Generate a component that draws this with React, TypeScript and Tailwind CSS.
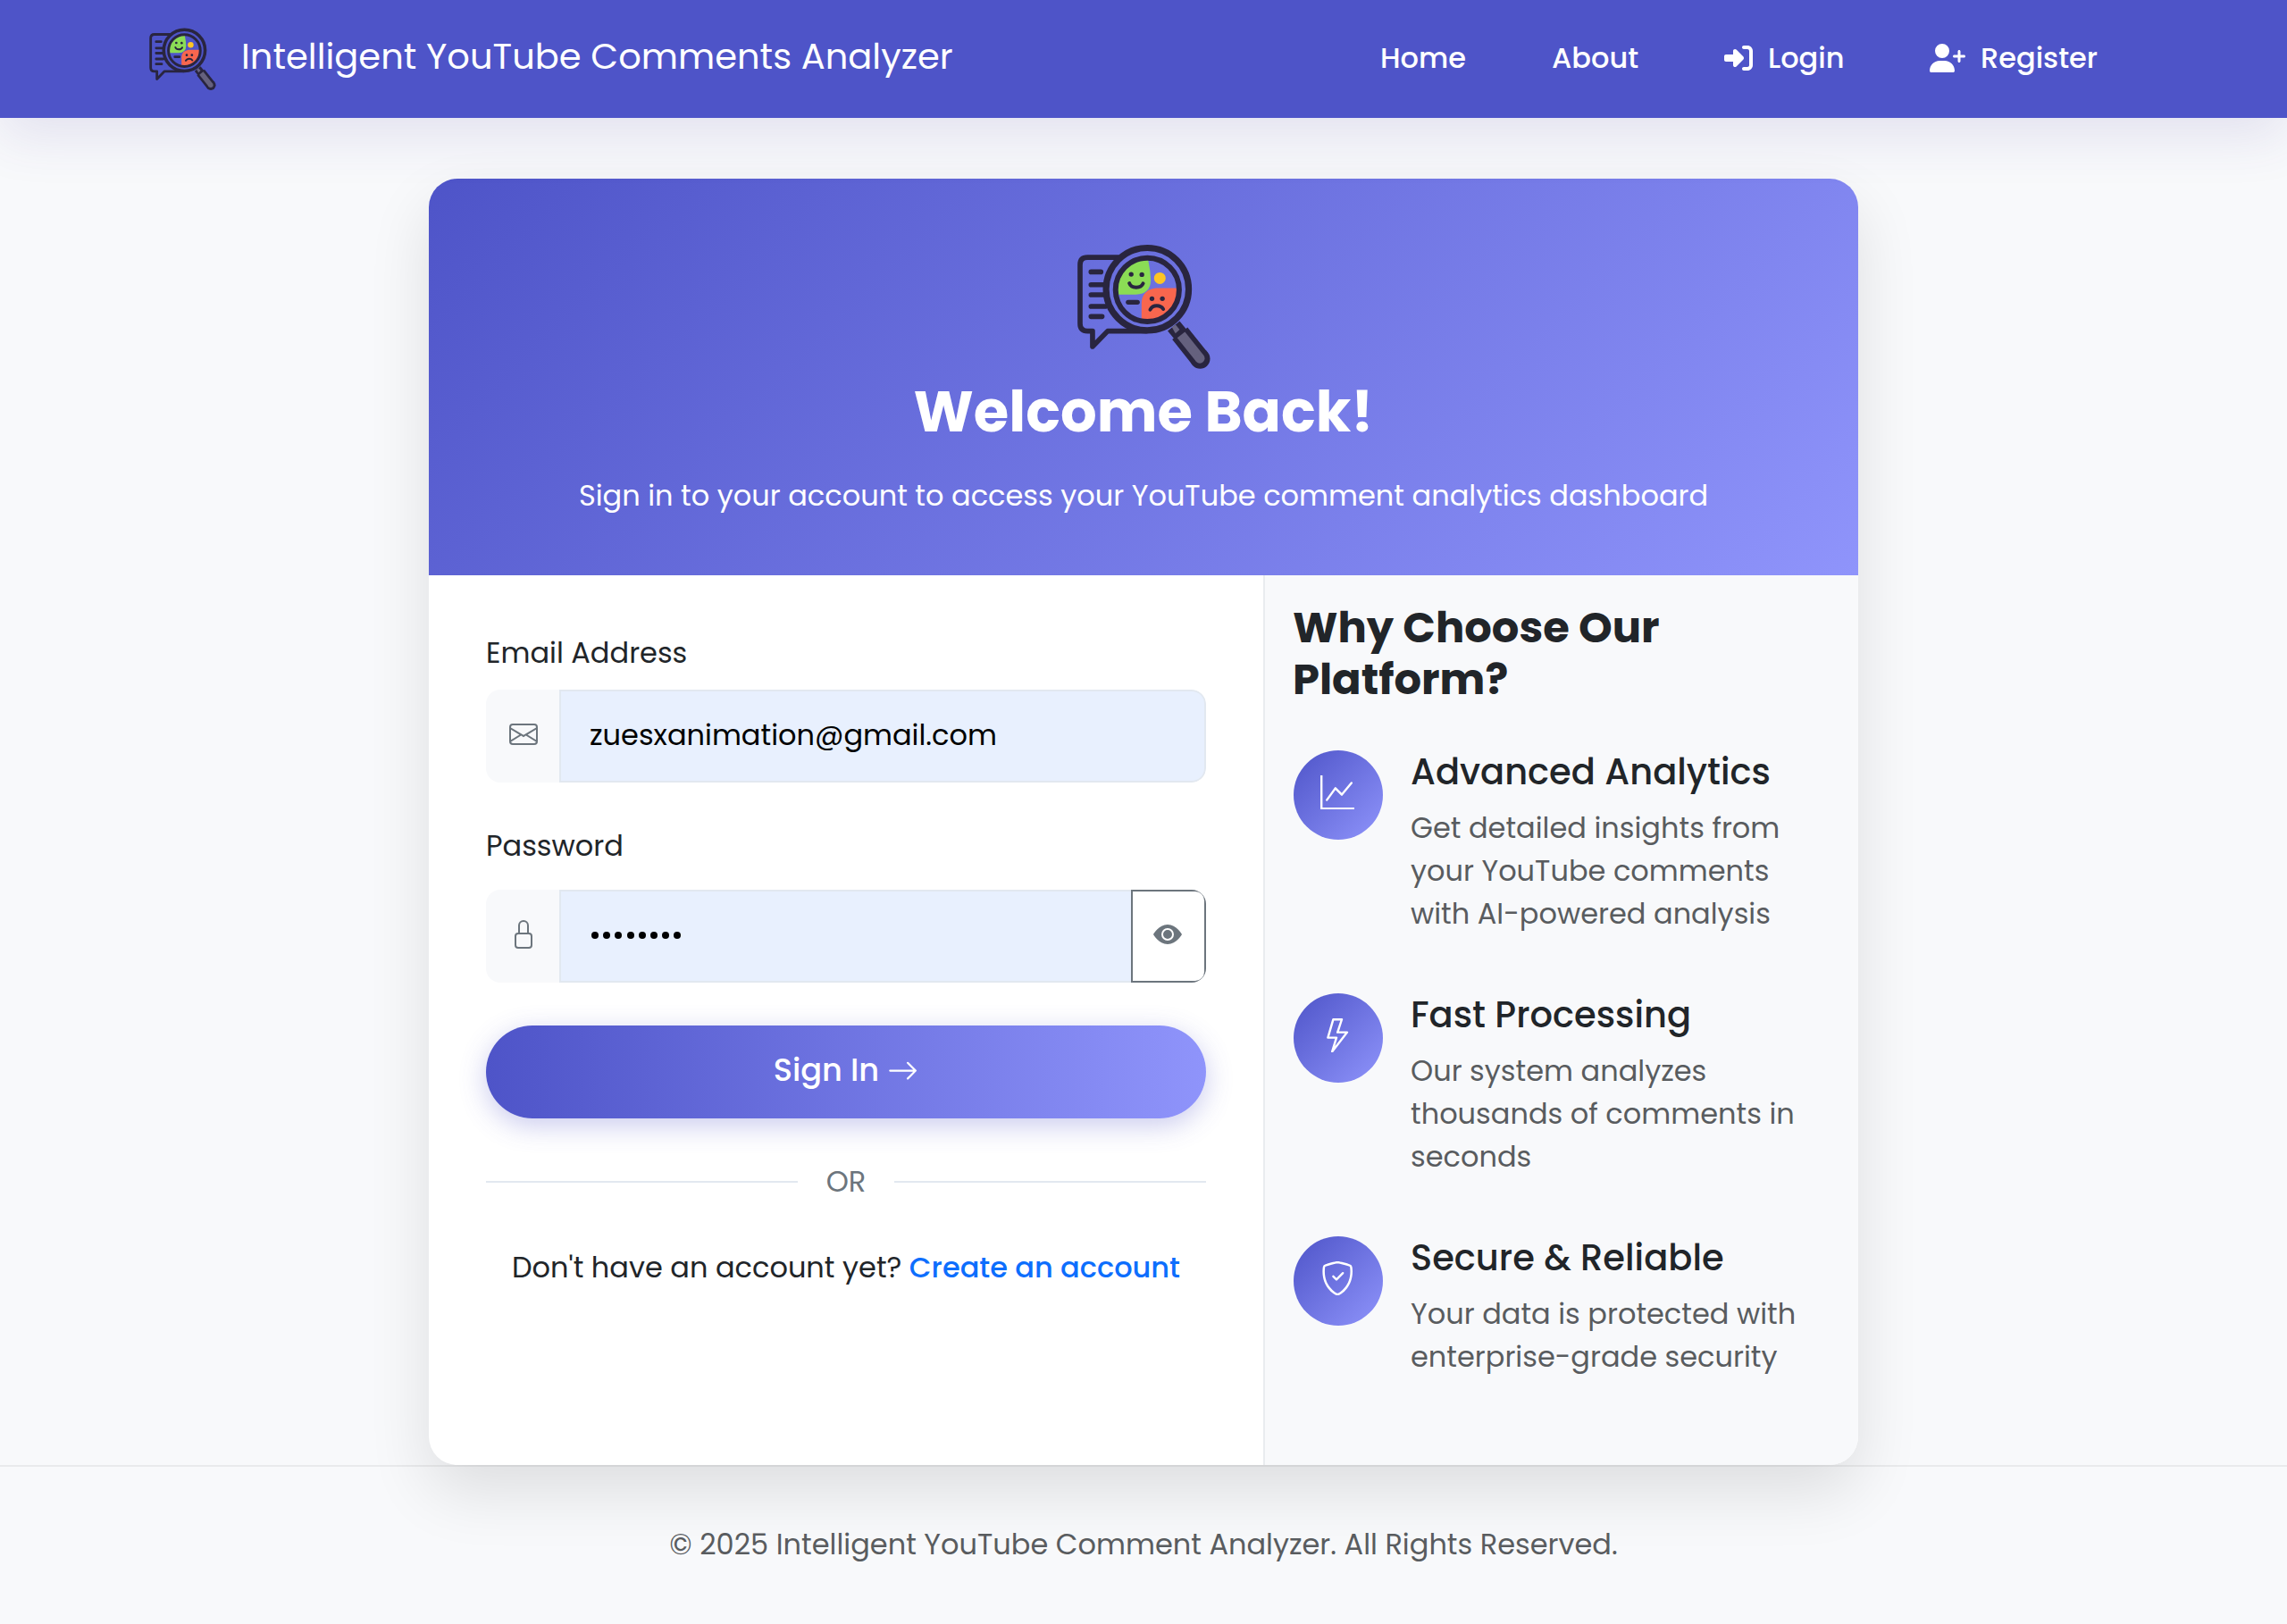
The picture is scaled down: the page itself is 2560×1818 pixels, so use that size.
import React from "react";
import { FaRightToBracket, FaUserPlus } from "react-icons/fa6";
import {
  BsArrowRight,
  BsEnvelope,
  BsEyeFill,
  BsGraphUp,
  BsLightning,
  BsLock,
  BsShieldCheck,
} from "react-icons/bs";

const INK = "#29253f";

function Logo({ className }: { className: string }) {
  return (
    <svg className={className} viewBox="138 100 448 420" fill="none" strokeLinecap="round" strokeLinejoin="round">
      <path
        d="M275 145H172Q147 145 147 170V368Q147 393 172 393H189V445L240 393H370"
        stroke={INK}
        strokeWidth="17"
      />
      <path d="M184 194H217M184 237H228M184 271H226M184 310H232M184 344H221" stroke={INK} strokeWidth="17" />
      <path d="M462 376L485 404" stroke={INK} strokeWidth="52" strokeLinecap="butt" />
      <path d="M483 401L551 486" stroke={INK} strokeWidth="66" strokeLinecap="butt" />
      <circle cx="551" cy="486" r="33.5" fill={INK} />
      <path d="M456 380L468 371L482 388L468 401Z" fill="#696583" />
      <path d="M487 406L550 485" stroke="#65617e" strokeWidth="33" strokeLinecap="butt" />
      <circle cx="550" cy="485" r="16.5" fill="#65617e" />
      <circle cx="373.5" cy="252" r="139" stroke={INK} strokeWidth="21.5" />
      <path d="M376 153Q384 190 385 222Q384 268 335 270H274A99 99 0 0 1 376 153Z" fill="#8bdc55" />
      <path d="M473 248H402Q356 254 354 298V354A100 100 0 0 0 473 248Z" fill="#f8664e" />
      <circle cx="373.5" cy="254" r="107" stroke={INK} strokeWidth="18" />
      <circle cx="415.5" cy="215" r="19.5" fill="#fec524" />
      <path d="M309 296H340" stroke={INK} strokeWidth="16" />
      <g fill={INK}>
        <circle cx="319" cy="202" r="8" />
        <circle cx="355" cy="203" r="8" />
        <circle cx="389" cy="284" r="8" />
        <circle cx="424" cy="284" r="8" />
      </g>
      <path d="M313 232Q318 246 336 246Q354 246 359 233" stroke={INK} strokeWidth="12" />
      <path d="M383 321Q390 308 405 308Q420 308 427 319" stroke={INK} strokeWidth="12" />
    </svg>
  );
}

function Navbar() {
  return (
    <nav className="relative z-10 flex h-[132px] items-center justify-between bg-[#4e54c8] pl-[167px] text-white shadow-[0_20px_60px_rgba(70,60,160,0.12)]">
      <a className="flex items-center gap-[28px]">
        <Logo className="h-[70px] w-[75px]" />
        <span className="mb-[6px] whitespace-nowrap text-[40px] leading-[48px]">
          Intelligent YouTube Comments Analyzer
        </span>
      </a>
      <div className="mb-[3px] flex w-[1015px] shrink-0 text-[32px] font-medium leading-[48px]">
        <a className="w-[192px]">Home</a>
        <a className="w-[193px]">About</a>
        <a className="flex w-[230px] items-center gap-[17px]">
          <FaRightToBracket className="size-8" />
          Login
        </a>
        <a className="flex items-center gap-[17px]">
          <FaUserPlus className="h-8 w-10" />
          Register
        </a>
      </div>
    </nav>
  );
}

function Field({
  icon,
  children,
  action,
}: {
  icon: React.ReactNode;
  children: React.ReactNode;
  action?: React.ReactNode;
}) {
  return (
    <div className="flex h-[104px] overflow-hidden rounded-[16px]">
      <div className="flex w-[82px] items-center bg-[#f8f9fb] pb-1 pl-[26px] text-[#6c757d]">{icon}</div>
      <div
        className={
          action
            ? "flex flex-1 items-center border-2 border-r-0 border-[#e2e8f0] bg-[#e8f0fe] pl-8 text-black"
            : "flex flex-1 items-center rounded-r-[16px] border-2 border-[#e2e8f0] bg-[#e8f0fe] pl-8 text-black"
        }
      >
        {children}
      </div>
      {action}
    </div>
  );
}

function LoginForm() {
  return (
    <div className="w-[934px] px-16 pt-[63px]">
      <label className="block leading-[48px]">Email Address</label>
      <div className="mt-[17px]">
        <Field icon={<BsEnvelope className="size-8" />}>
          <span className="mb-[2px]">zuesxanimation@gmail.com</span>
        </Field>
      </div>
      <label className="mt-[47px] block leading-[48px]">Password</label>
      <div className="mt-[25px]">
        <Field
          icon={<BsLock className="size-8" />}
          action={
            <button className="flex w-[84px] items-center justify-center rounded-r-[12px] border-2 border-[#6c757d] bg-white pb-1 pr-[2px] text-[#6c757d]">
              <BsEyeFill className="size-8" />
            </button>
          }
        >
          <div className="mb-0.5 ml-[2px] flex gap-[5.2px]">
            {[0, 1, 2, 3, 4, 5, 6, 7].map((i) => (
              <span key={i} className="size-2 rounded-full bg-black" />
            ))}
          </div>
        </Field>
      </div>
      <button className="mt-12 flex h-[104px] w-full items-center justify-center gap-[9px] rounded-full bg-[linear-gradient(90deg,#4e54c8,#8f94fb)] pb-[4px] text-[35.2px] font-medium text-white shadow-[0_8px_30px_rgba(78,84,200,0.3)]">
        <span>Sign In</span>
        <BsArrowRight className="mt-px size-[35.2px]" />
      </button>
      <div className="mt-[47px] flex h-12 items-center text-[#6c757d]">
        <span className="h-[2px] flex-1 bg-[#e2e8f0]" />
        <span className="w-[108px] text-center">OR</span>
        <span className="h-[2px] flex-1 bg-[#e2e8f0]" />
      </div>
      <p className="mt-[48px] whitespace-nowrap text-center leading-[48px]">
        Don't have an account yet? <a className="font-medium text-[#0d6efd]">Create an account</a>
      </p>
    </div>
  );
}

function Feature({ icon, title, children }: { icon: React.ReactNode; title: string; children: React.ReactNode }) {
  return (
    <div className="flex h-[272px] gap-[31px]">
      <div className="flex size-[100px] shrink-0 items-center justify-center rounded-full bg-[linear-gradient(135deg,#4e54c8,#8f94fb)] pb-[6px] pr-[2px] text-white">
        {icon}
      </div>
      <div className="w-[460px]">
        <h3 className="text-[40px] font-medium leading-[48px]">{title}</h3>
        <p className="mt-[15px] leading-[48px] text-[#595c5f]">{children}</p>
      </div>
    </div>
  );
}

function Features() {
  return (
    <div className="w-[666px] border-l-2 border-[#e9ecef] bg-[#f8f9fb] pl-8 pt-[30px]">
      <h2 className="-ml-px mb-[51px] w-[500px] text-[48px] font-bold leading-[57.6px]">Why Choose Our Platform?</h2>
      <Feature icon={<BsGraphUp className="size-[38.4px]" />} title="Advanced Analytics">
        Get detailed insights from your YouTube comments with AI-powered analysis
      </Feature>
      <Feature icon={<BsLightning className="size-[38.4px]" />} title="Fast Processing">
        Our system analyzes thousands of comments in seconds
      </Feature>
      <Feature icon={<BsShieldCheck className="size-[38.4px]" />} title="Secure & Reliable">
        Your data is protected with enterprise-grade security
      </Feature>
    </div>
  );
}

export default function App() {
  return (
    <div className="h-[1818px] overflow-hidden bg-[#f8f9fb] font-['Poppins','Inter',sans-serif] text-[32px] text-[#212529]">
      <Navbar />
      <main className="mx-auto mt-[68px] h-[1440px] w-[1600px] overflow-hidden rounded-[32px] bg-white shadow-[0_30px_70px_rgba(0,0,0,0.11)]">
        <header className="flex h-[444px] flex-col items-center bg-[linear-gradient(135deg,#4e54c8,#8f94fb)] pt-[73px] text-white">
          <Logo className="h-[140px] w-[149px]" />
          <h1 className="mt-[10px] text-[64px] font-bold leading-[76.8px]">Welcome Back!</h1>
          <p className="mt-[31px] whitespace-nowrap leading-[48px]">
            Sign in to your account to access your YouTube comment analytics dashboard
          </p>
        </header>
        <div className="flex h-[996px]">
          <LoginForm />
          <Features />
        </div>
      </main>
      <footer className="border-t-2 border-black/6 pt-[63px] text-center leading-[48px] text-[#595c5f]">
        © 2025 Intelligent YouTube Comment Analyzer. All Rights Reserved.
      </footer>
    </div>
  );
}
